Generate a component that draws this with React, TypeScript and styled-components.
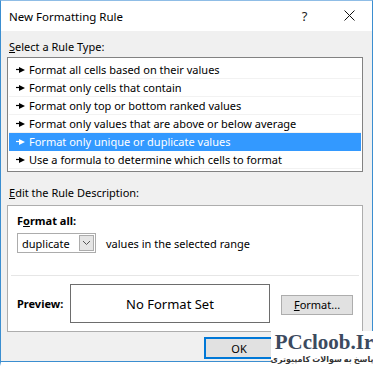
import React from 'react';
import styled, { createGlobalStyle } from 'styled-components';

const Global = createGlobalStyle`
  html, body { margin: 0; padding: 0; background: #fff; }
  body { font-family: "Noto Sans", "Open Sans", sans-serif; font-size: 11px; color: #000; }
`;

const Page = styled.div`
  position: relative;
  width: 373px;
  height: 366px;
  overflow: hidden;
`;

const Window = styled.div`
  width: 373px;
  height: 366px;
  box-sizing: border-box;
  border: 1px solid #3b8ed0;
  border-top-color: #8fbde6;
  border-bottom: 4px solid #fff;
  background: #f0f0f0;
  display: flex;
  flex-direction: column;
  box-shadow: inset 0 -1px 0 #3b8ed0;
`;

const TitleBar = styled.div`
  height: 30px;
  background: #fff;
  display: flex;
  align-items: center;
  padding-left: 8px;
  font-size: 11.5px;
`;

const Title = styled.div`
  flex: 1;
`;

const TitleButton = styled.div`
  width: 45px;
  text-align: center;
  font-size: 13px;
  color: #222;
`;

const Body = styled.div`
  flex: 1;
  padding: 7px 6px 0 6px;
  display: flex;
  flex-direction: column;
`;

const Label = styled.div`
  height: 18px;
  line-height: 18px;
  padding-left: 2px;
  u { text-decoration: underline; }
`;

const ListBox = styled.div`
  margin-top: 1px;
  width: 356px;
  box-sizing: border-box;
  border: 1px solid #828282;
  background: #fff;
  padding: 3px 1px 2px 1px;
`;

const Row = styled.div<{ $selected?: boolean }>`
  height: 18px;
  padding-left: 7px;
  display: flex;
  align-items: center;
  gap: 4px;
  background: ${(p) => (p.$selected ? '#3399ff' : '#fff')};
  color: ${(p) => (p.$selected ? '#fff' : '#000')};
  border-bottom: 1px solid ${(p) => (p.$selected ? '#3399ff' : '#f2f2f2')};
  box-sizing: border-box;
  white-space: nowrap;
`;

const SectionLabel = styled(Label)`
  margin-top: 12px;
`;

const Panel = styled.div`
  margin-top: 3px;
  width: 356px;
  height: 127px;
  box-sizing: border-box;
  border: 1px solid #adadad;
  background: #fff;
  display: flex;
  flex-direction: column;
`;

const PanelTop = styled.div`
  height: 64px;
  padding: 5px 9px 0 9px;
  border-bottom: 1px solid #e6e6e6;
  margin: 0 3px;
`;

const Bold = styled.div`
  font-weight: bold;
  height: 20px;
  line-height: 20px;
  margin-left: -3px;
  u { text-decoration: underline; }
`;

const Line = styled.div`
  display: flex;
  align-items: center;
  gap: 10px;
  margin-top: 2px;
  margin-left: -3px;
`;

const Select = styled.div`
  width: 79px;
  height: 20px;
  box-sizing: border-box;
  border: 1px solid #acacac;
  display: flex;
  align-items: center;
  padding-left: 4px;
  justify-content: space-between;
  padding-right: 1px;
`;

const SelectButton = styled.div`
  width: 15px;
  height: 16px;
  box-sizing: border-box;
  border: 1px solid #acacac;
  background: #e5e5e5;
  display: flex;
  align-items: center;
  justify-content: center;
`;

const PreviewRow = styled.div`
  flex: 1;
  display: flex;
  align-items: center;
  padding-left: 9px;
`;

const PreviewLabel = styled.div`
  font-weight: bold;
  width: 53px;
`;

const PreviewBox = styled.div`
  width: 200px;
  height: 39px;
  box-sizing: border-box;
  border: 1px solid #6d6d6d;
  display: flex;
  align-items: center;
  justify-content: center;
  font-size: 13px;
`;

const Button = styled.div<{ $default?: boolean }>`
  width: ${(p) => (p.$default ? '70px' : '72px')};
  height: ${(p) => (p.$default ? '22px' : '20px')};
  box-sizing: border-box;
  border: ${(p) => (p.$default ? '2px solid #0078d7' : '1px solid #adadad')};
  background: #e1e1e1;
  display: flex;
  align-items: center;
  justify-content: center;
  u { text-decoration: underline; }
`;

const FormatButton = styled(Button)`
  margin-left: 11px;
  margin-top: 2px;
`;

// hidden under the watermark in the screenshot, so no visible label
const CancelButton = styled(Button)`
  margin-left: 8px;
`;

const Footer = styled.div`
  display: flex;
  padding-left: 197px;
  margin-top: 5px;
`;

/* site watermark stamped over the Cancel button */
const Watermark = styled.div`
  position: absolute;
  left: 271px;
  top: 331px;
  width: 102px;
  height: 35px;
  background: #fff;
  display: flex;
  flex-direction: column;
  align-items: center;
`;

const Brand = styled.div`
  font-family: "Liberation Serif", "DejaVu Serif", serif;
  font-size: 21px;
  font-weight: bold;
  color: #3c4a5e;
  line-height: 22px;
  white-space: nowrap;
  margin-left: 4px;
`;

const Tagline = styled.div`
  font-family: "Noto Sans", "DejaVu Sans", sans-serif;
  font-size: 8px;
  font-weight: bold;
  color: #333;
  line-height: 11px;
  direction: rtl;
  white-space: nowrap;
`;

const Pointer = ({ color }: { color: string }) => (
  <svg width="9" height="6" viewBox="0 0 9 6">
    <path d="M0 2.5 H4" stroke={color} strokeWidth="1.2" />
    <path d="M3 0 L9 3 L3 6 Z" fill={color} />
  </svg>
);

const rules = [
  'Format all cells based on their values',
  'Format only cells that contain',
  'Format only top or bottom ranked values',
  'Format only values that are above or below average',
  'Format only unique or duplicate values',
  'Use a formula to determine which cells to format',
];

const App = () => (
  <Page>
    <Global />
    <Window>
      <TitleBar>
        <Title>New Formatting Rule</Title>
        <TitleButton>?</TitleButton>
        <TitleButton>
          <svg width="11" height="11" viewBox="0 0 11 11">
            <path d="M0.5 0.5 L10.5 10.5 M10.5 0.5 L0.5 10.5" stroke="#111" strokeWidth="1" />
          </svg>
        </TitleButton>
      </TitleBar>
      <Body>
        <Label>
          <u>S</u>elect a Rule Type:
        </Label>
        <ListBox>
          {rules.map((r, i) => (
            <Row key={r} $selected={i === 4}>
              <Pointer color={i === 4 ? '#fff' : '#000'} />
              {r}
            </Row>
          ))}
        </ListBox>
        <SectionLabel>
          <u>E</u>dit the Rule Description:
        </SectionLabel>
        <Panel>
          <PanelTop>
            <Bold>
              F<u>o</u>rmat all:
            </Bold>
            <Line>
              <Select>
                duplicate
                <SelectButton>
                  <svg width="9" height="6" viewBox="0 0 9 6">
                    <path d="M1 1 L4.5 4.5 L8 1" stroke="#555" fill="none" />
                  </svg>
                </SelectButton>
              </Select>
              values in the selected range
            </Line>
          </PanelTop>
          <PreviewRow>
            <PreviewLabel>Preview:</PreviewLabel>
            <PreviewBox>No Format Set</PreviewBox>
            <FormatButton>
              <span>
                <u>F</u>ormat...
              </span>
            </FormatButton>
          </PreviewRow>
        </Panel>
        <Footer>
          <Button $default>OK</Button>
          <CancelButton aria-label="Cancel" />
        </Footer>
      </Body>
    </Window>
    <Watermark>
      <Brand>PCcloob.Ir</Brand>
      <Tagline>پاسخ به سوالات کامپیوتری</Tagline>
    </Watermark>
  </Page>
);

export default App;
